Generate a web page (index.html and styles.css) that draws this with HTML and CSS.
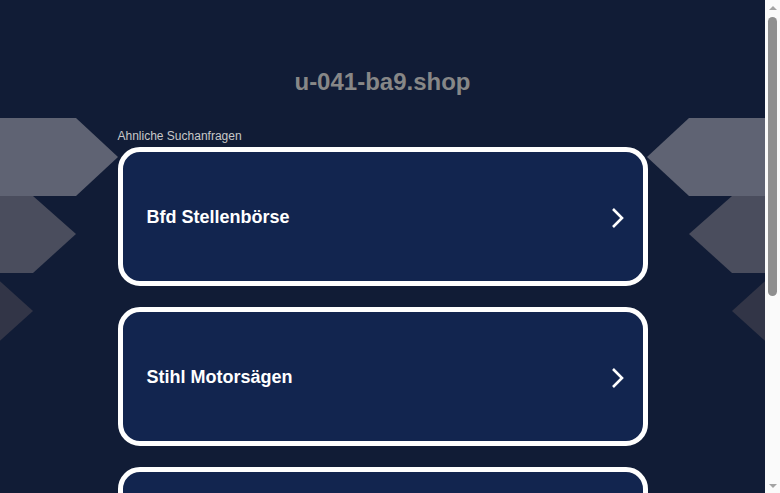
FILE: index.html
```html
<!DOCTYPE html>
<html lang="de">
<head>
<meta charset="utf-8">
<title>u-041-ba9.shop</title>
<link rel="stylesheet" href="styles.css">
</head>
<body>
<div class="window">
  <div class="viewport">
    <div class="page">
      <svg class="deco deco-left" width="118" height="240" viewBox="0 0 118 240" aria-hidden="true">
        <polygon points="0,0 76,0 118,39 76,78 0,78" fill="#5f6373"/>
        <polygon points="0,78 33,78 76,116 33,155 0,155" fill="#4a4d5d"/>
        <polygon points="-9,155 33,193 -9,231" fill="#323547"/>
      </svg>
      <svg class="deco deco-right" width="118" height="240" viewBox="0 0 118 240" aria-hidden="true">
        <polygon points="0,0 76,0 118,39 76,78 0,78" fill="#5f6373"/>
        <polygon points="0,78 33,78 76,116 33,155 0,155" fill="#4a4d5d"/>
        <polygon points="-9,155 33,193 -9,231" fill="#323547"/>
      </svg>

      <header class="header">
        <h1 class="domain">u-041-ba9.shop</h1>
      </header>

      <main class="content">
        <p class="label">Ahnliche Suchanfragen</p>
        <ul class="links">
          <li><a class="card" href="#"><span class="card-text">Bfd Stellenbörse</span>
            <svg class="chev" width="14" height="22" viewBox="0 0 14 22"><polyline points="2,2 11,11 2,20" fill="none" stroke="#fff" stroke-width="2.6"/></svg></a></li>
          <li><a class="card" href="#"><span class="card-text">Stihl Motorsägen</span>
            <svg class="chev" width="14" height="22" viewBox="0 0 14 22"><polyline points="2,2 11,11 2,20" fill="none" stroke="#fff" stroke-width="2.6"/></svg></a></li>
          <li><a class="card" href="#"><span class="card-text">Jobbörse Arbeitsamt</span>
            <svg class="chev" width="14" height="22" viewBox="0 0 14 22"><polyline points="2,2 11,11 2,20" fill="none" stroke="#fff" stroke-width="2.6"/></svg></a></li>
        </ul>
      </main>
    </div>
  </div>
  <div class="scrollbar" aria-hidden="true">
    <div class="sb-arrow sb-up"></div>
    <div class="sb-track">
      <div class="sb-thumb"></div>
    </div>
    <div class="sb-arrow sb-down"></div>
  </div>
</div>
</body>
</html>
```

FILE: styles.css
```css
html, body {
  margin: 0;
  padding: 0;
  height: 100%;
  overflow: hidden;
  background: #111c36;
}

body {
  font-family: "Liberation Sans", Arial, sans-serif;
}

.window {
  display: flex;
  height: 100%;
}

.viewport {
  flex: 1;
  min-width: 0;
  overflow: hidden;
}

.page {
  position: relative;
  min-height: 818px;
  overflow: hidden;
}

.deco {
  position: absolute;
  top: 118px;
  display: block;
}

.deco-left {
  left: 0;
}

.deco-right {
  right: 0;
  transform: scaleX(-1);
}

.header {
  padding-top: 67px;
  text-align: center;
}

.domain {
  margin: 0;
  font-size: 24px;
  line-height: 30px;
  font-weight: bold;
  color: #878787;
}

.content {
  position: relative;
  width: 530px;
  margin: 0 auto;
  padding-top: 32px;
}

.label {
  margin: 0 0 4px 0;
  font-size: 12px;
  line-height: 14px;
  color: #c8c8c8;
}

.links {
  list-style: none;
  margin: 0;
  padding: 0;
  display: flex;
  flex-direction: column;
  gap: 21px;
}

.card {
  box-sizing: border-box;
  height: 139px;
  display: flex;
  align-items: center;
  justify-content: space-between;
  padding: 2px 18px 0 24px;
  background: #12254f;
  border: 5px solid #fff;
  border-radius: 22px;
  text-decoration: none;
}

.card-text {
  font-size: 18px;
  font-weight: bold;
  color: #fff;
}

.chev {
  display: block;
}

/* fake browser scrollbar */
.scrollbar {
  width: 15px;
  flex: none;
  display: flex;
  flex-direction: column;
  background: #fafafa;
}

.sb-arrow {
  height: 15px;
  flex: none;
  display: flex;
  align-items: center;
  justify-content: center;
}

.sb-up::before,
.sb-down::before {
  content: "";
  width: 0;
  height: 0;
  border-left: 4px solid transparent;
  border-right: 4px solid transparent;
}

.sb-up::before {
  border-bottom: 4px solid #a3a3a3;
}

.sb-down::before {
  border-top: 4px solid #a3a3a3;
}

.sb-track {
  flex: 1;
  padding: 2px 3px 0 3px;
}

.sb-thumb {
  height: 279px;
  background: #8f8f8f;
  border-radius: 5px;
}
```
